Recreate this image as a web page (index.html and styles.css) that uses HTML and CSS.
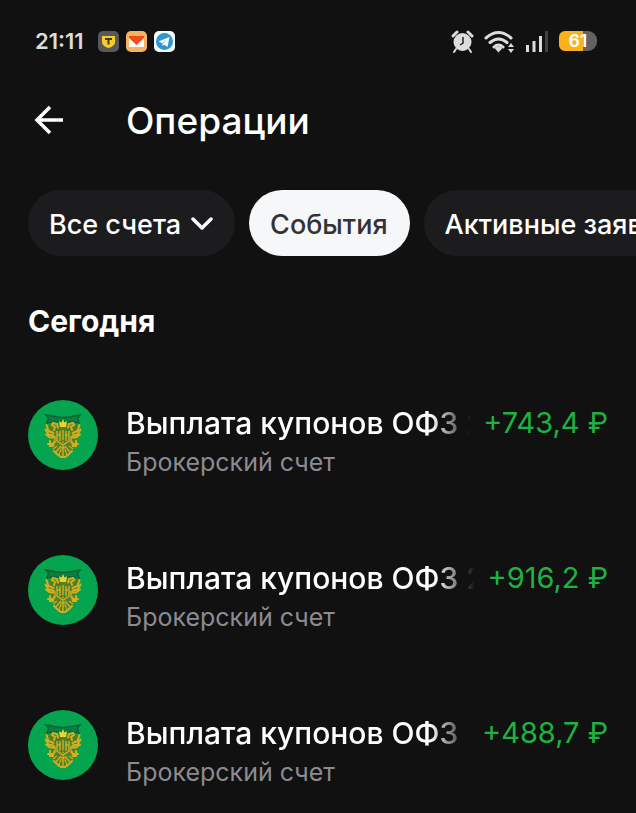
FILE: index.html
```html
<!DOCTYPE html>
<html lang="ru">
<head>
<meta charset="utf-8">
<meta name="viewport" content="width=device-width, initial-scale=1">
<title>Операции</title>
<link rel="stylesheet" href="styles.css">
</head>
<body>
<svg class="sprite" aria-hidden="true">
  <symbol id="emblem" viewBox="0 0 70 70">
    <circle cx="35" cy="35" r="35" fill="#05a44f"/>
    <path d="M18 15l6 1q5 1.500 11 1.500T46 16l6-1-2.500 3 1.500 5-5-1H24l-5 1 1.500-5z" fill="#0a7f42" stroke="#0b6436" stroke-width="1.500"/>
    <path d="M29 24l-5-1-5 4 0 10 4 3v7l4 6 8 4 8-4 4-6v-7l4-3V27l-5-4-5 1-6 3z" fill="#4f8128"/>
    <g fill="none" stroke="#d3ae20" stroke-width="2" stroke-linecap="round">
      <path d="M30 28l-1-4-4-1-1 2 3 2-1 3M40 28l1-4 4-1 1 2-3 2 1 3"/>
      <path d="M18.500 25l2 6 5 2M17.500 29.500l3 5 5 1M18 34.500l4 3 4 0M51.500 25l-2 6-5 2M52.500 29.500l-3 5-5 1M52 34.500l-4 3-4 0"/>
      <path d="M22 41v5h3l1-4M20 44h5M48 41v5h-3l-1-4M50 44h-5"/>
      <path d="M26 51l4 4 3 2h4l3-2 4-4"/>
    </g>
    <g fill="none" stroke="#c4ad24" stroke-width="1.500">
      <path d="M29 31v10l6 4 6-4V31M32 31v10M35 30v13M38 31v10M27 36v7M43 36v7M29 35h4M37 35h4"/>
      <path d="M33 46l-5 6M34 47l-3 8M35 46v11M36 47l3 8M37 46l5 6M29 46l-4 3M41 46l4 3"/>
    </g>
    <path d="M31 21l2.500 1.500L35 19l1.500 3.500L39 21l-1 6h-6z" fill="#efd02c"/>
    <path d="M28 29h3M39 29h3M33 41h4M33 49h1M36 49h1M32 53h1M37 53h1" stroke="#765b18" fill="none"/>
  </symbol>
</svg>

<div class="statusbar">
  <time class="clock">21:11</time>
  <div class="apps">
    <svg width="21" height="21" viewBox="0 0 21 21" role="img" aria-label="Т-Банк"><rect width="21" height="21" rx="5" fill="#58585c"/><path d="M4 5h13v6q0 4-6.500 6Q4 15 4 11z" fill="#f5cf23"/><path d="M7 8h7M10.500 8v5.500" fill="none" stroke="#42391b" stroke-width="2"/></svg>
    <svg width="21" height="21" viewBox="0 0 21 21" role="img" aria-label="Почта"><rect width="21" height="21" rx="5" fill="#f5b560"/><path d="M3 6h15v10H3z" fill="#fff"/><path d="M3 5h15v2l-7.500 7L3 7z" fill="#ee4f1d"/></svg>
    <svg width="21" height="21" viewBox="0 0 21 21" role="img" aria-label="Telegram"><rect width="21" height="21" rx="5" fill="#f4fafc"/><circle cx="10.500" cy="10.500" r="8.500" fill="#2f96cf"/><path d="M4.500 10.500l11-4.500-2 10-3.500-2.500-1.500 1.500-.5-3z" fill="#fff"/><path d="M8 12l5-3.500-3.500 4-1 2z" fill="#9bc9e2"/></svg>
  </div>
  <div class="indicators">
    <svg width="23" height="23" viewBox="0 0 23 23" role="img" aria-label="Будильник"><path d="M2 6l4-4M21 6l-4-4" stroke="#dcdcdc" stroke-width="3" stroke-linecap="round"/><circle cx="11.500" cy="12" r="9" fill="#dcdcdc"/><path d="M5 19l-2 3M18 19l2 3" stroke="#dcdcdc" stroke-width="2" stroke-linecap="round"/><path d="M12 7v6l-3 2" fill="none" stroke="#222" stroke-width="1.500"/></svg>
    <svg width="31" height="23" viewBox="0 0 31 23" role="img" aria-label="Wi-Fi"><g fill="none" stroke="#dcdcdc" stroke-width="3" stroke-linecap="round"><path d="M2 8q12.500-11 25 0M6 12.500q8.500-7 17 0M10 17q4.500-4 9 0"/></g><path d="M10.500 18q4-3 8 0l-4 4.500z" fill="#dcdcdc"/><path d="M24 17l3-4 3 4zM24 19h6l-3 4z" fill="#dcdcdc"/></svg>
    <svg width="24" height="23" viewBox="0 0 24 23" role="img" aria-label="Сеть"><path d="M2.500 15v7M9 11v11M15.500 6v16" stroke="#dcdcdc" stroke-width="3"/><path d="M21.500 1v21" stroke="#414144" stroke-width="3"/></svg>
    <div class="battery"><span>61</span></div>
  </div>
</div>

<header class="topbar">
  <button class="back" type="button" aria-label="Назад">
    <svg width="30" height="30" viewBox="0 0 30 30" fill="none" stroke="#fff" stroke-width="3.500"><path d="M16 2L3 15l13 13M3 15h26"/></svg>
  </button>
  <h1>Операции</h1>
</header>

<nav class="chips" aria-label="Фильтры">
  <button class="chip" type="button">Все счета
    <svg width="22" height="14" viewBox="0 0 22 14" fill="none" stroke="#fff" stroke-width="3.500" stroke-linecap="round" stroke-linejoin="round"><path d="M2 2l9 9 9-9"/></svg>
  </button>
  <button class="chip chip-active" type="button" aria-pressed="true">События</button>
  <button class="chip" type="button">Активные заявки</button>
</nav>

<main>
  <h2>Сегодня</h2>
  <ul class="operations">
    <li class="operation">
      <svg class="logo" aria-hidden="true"><use href="#emblem"/></svg>
      <div class="details"><p class="name">Выплата купонов ОФЗ 2</p><p class="account">Брокерский счет</p></div>
      <p class="amount">+743,4 ₽</p>
    </li>
    <li class="operation">
      <svg class="logo" aria-hidden="true"><use href="#emblem"/></svg>
      <div class="details"><p class="name">Выплата купонов ОФЗ 2</p><p class="account">Брокерский счет</p></div>
      <p class="amount">+916,2 ₽</p>
    </li>
    <li class="operation">
      <svg class="logo" aria-hidden="true"><use href="#emblem"/></svg>
      <div class="details"><p class="name">Выплата купонов ОФЗ</p><p class="account">Брокерский счет</p></div>
      <p class="amount">+488,7 ₽</p>
    </li>
  </ul>
</main>
</body>
</html>
```
FILE: styles.css
```css
* { box-sizing: border-box; }

body {
  margin: 0;
  background: #111112;
  color: #fff;
  font-family: Inter, "Liberation Sans", sans-serif;
  overflow-x: hidden;
}

h1, h2, p, ul { margin: 0; padding: 0; }

button {
  border: 0;
  padding: 0;
  background: none;
  color: inherit;
  font: inherit;
}

.sprite { display: block; width: 0; height: 0; }

.statusbar {
  display: flex;
  align-items: center;
  gap: 14px;
  padding: 26px 39px 0 35px;
  height: 56px;
}

.clock {
  color: #dcdcdc;
  font-size: 22px;
  font-weight: 600;
}

.apps { display: flex; gap: 7px; }

.apps svg, .indicators svg { display: block; }

.indicators {
  display: flex;
  align-items: center;
  gap: 10px;
  margin-left: auto;
}

.battery {
  width: 38px;
  height: 20px;
  border-radius: 6px 9px 9px 6px;
  background: linear-gradient(to right, #fbb21a 63%, #626265 63%);
  color: #fff;
  font-size: 17px;
  font-weight: 700;
  line-height: 20px;
  text-align: center;
}

.topbar {
  display: flex;
  align-items: center;
  gap: 62px;
  padding: 33px 28px 0 34px;
}

.back { display: flex; }

h1 {
  padding-top: 2px;
  font-size: 37px;
  font-weight: 500;
  line-height: 60px;
}

.chips {
  display: flex;
  gap: 14px;
  padding: 39px 0 0 28px;
  overflow: hidden;
}

.chip {
  display: flex;
  flex: none;
  align-items: center;
  gap: 10px;
  height: 66px;
  padding: 2px 22px 0 21px;
  border-radius: 33px;
  background: #1c1c1e;
  font-size: 27px;
  font-weight: 500;
  white-space: nowrap;
}

.chip-active { background: #f6f7f9; color: #333335; }

main { padding: 43px 28px 0; }

h2 {
  font-size: 30px;
  font-weight: 700;
  line-height: 44px;
}

.operations {
  display: flex;
  flex-direction: column;
  gap: 75px;
  padding-top: 57px;
  list-style: none;
}

.operation {
  display: flex;
  align-items: flex-start;
  height: 80px;
}

.logo { flex: none; width: 70px; height: 70px; }

.details { flex: 1; min-width: 0; margin: 3px 12px 0 28px; }

.name {
  overflow: hidden;
  font-size: 30px;
  font-weight: 500;
  line-height: 40px;
  white-space: nowrap;
  mask-image: linear-gradient(to left, transparent, #000 40px);
}

.account {
  color: #8b8b91;
  font-size: 25px;
  line-height: 38px;
}

.amount {
  padding-top: 3px;
  color: #1fb141;
  font-size: 29px;
  font-weight: 400;
  line-height: 40px;
  white-space: nowrap;
}
```
